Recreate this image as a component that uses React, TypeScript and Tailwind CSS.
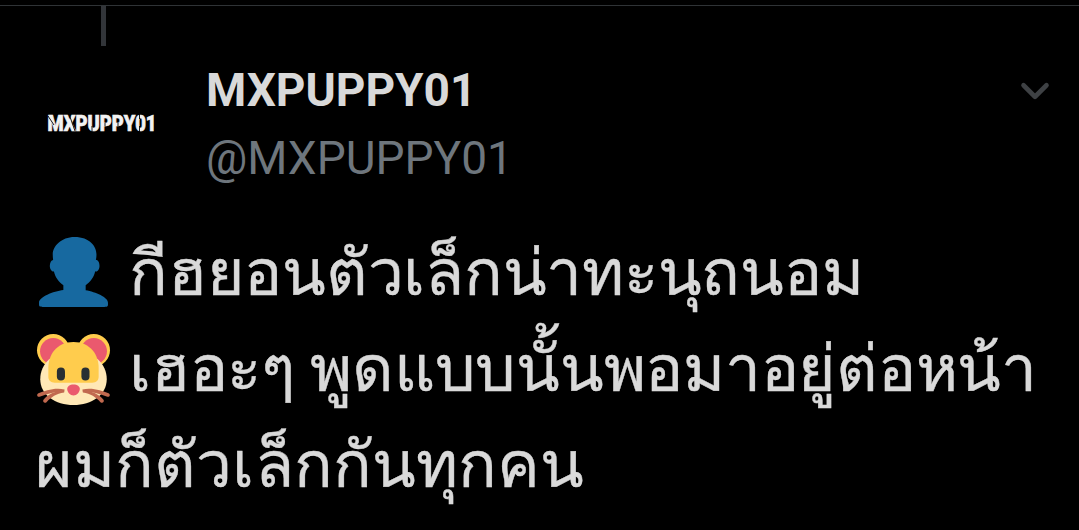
import type { ReactNode } from "react";
import { ChevronDown } from "lucide-react";

function SilhouetteEmoji() {
  return (
    <svg viewBox="0 0 36 36" className="w-[73px] h-[73px] shrink-0">
      <path
        fill="#1769a0"
        d="M24 26.799v-2.566c2-1.348 4.08-3.779 4.703-6.896.186.103.206.17.413.17.991 0 1.709-1.287 1.709-2.873 0-1.562-.823-2.827-1.794-2.865.187-.674.293-1.577.293-2.735C29.324 5.168 26 .527 18.541.527c-6.629 0-10.777 4.641-10.777 8.507 0 1.123.069 2.043.188 2.755-.911.137-1.629 1.352-1.629 2.845 0 1.587.804 2.873 1.796 2.873.206 0 .025-.067.209-.17C8.952 20.453 11 22.885 13 24.232v2.414c-5 .645-12 3.437-12 6.23v1.061C1 35 2.076 35 3.137 35h29.725C33.924 35 35 35 35 33.938v-1.061c0-2.615-6-5.225-11-6.078z"
      />
    </svg>
  );
}

function HamsterEmoji() {
  return (
    <svg viewBox="0 -0.5 36 36" className="w-[73px] h-[73px] shrink-0 overflow-visible">
      {/* ears */}
      <circle cx="8" cy="8.5" r="8" fill="#ffcc4d" />
      <circle cx="28" cy="8.5" r="8" fill="#ffcc4d" />
      <circle cx="8" cy="9" r="6.5" fill="#ea596e" />
      <circle cx="28" cy="9" r="6.5" fill="#ea596e" />
      {/* head */}
      <path
        fill="#ffe8b6"
        d="M18 9C8 9 1.6 15 1.6 22.8 1.6 30.5 9 35.500 18 35.500s16.400-5 16.400-12.700C34.400 15 28 9 18 9z"
      />
      <path
        fill="#ffcc4d"
        d="M18 4.400C9.500 4.400 5.600 11 5.600 17v4.500c0 2 1.200 3 3.200 3h18.400c2 0 3.200-1 3.200-3V17C30.400 11 26.500 4.400 18 4.400z"
      />
      <rect x="9.8" y="17" width="4" height="6.4" rx="2" fill="#292f33" />
      <rect x="21.9" y="17" width="4" height="6.4" rx="2" fill="#292f33" />
      <path
        fill="#ea596e"
        d="M18 25.400c-1.900 0-3.100.9-3.100 2.200 0 1.500 1.500 3.200 3.100 3.200s3.100-1.700 3.100-3.200c0-1.300-1.200-2.200-3.100-2.200z"
      />
      {/* whiskers */}
      <g fill="#c1694f">
        <path d="M13.600 27.800C9 26.700 4 28.300.7 29.700c-1.100.6-.6 2 .6 1.700C5 30 9 29 13.400 29z" />
        <path d="M13.400 28.300C9 28.300 5 30.500 3.200 32.900c-.6 1 .5 1.900 1.500 1.200C7 31.500 9.500 29.900 13.400 29.300z" />
        <path d="M22.400 27.800c4.600-1.100 9.600.5 12.900 1.900 1.100.6.6 2-.6 1.700C31 30 27 29 22.600 29z" />
        <path d="M22.600 28.300c4.400 0 8.400 2.200 10.200 4.600.6 1-.5 1.900-1.500 1.200-2.300-2.600-4.800-4.200-8.700-4.800z" />
      </g>
    </svg>
  );
}

function Avatar() {
  return (
    <div className="w-[130px] h-[130px] rounded-full bg-black flex items-center justify-center">
      <svg viewBox="0 0 120 40" className="w-[120px] h-[40px] overflow-visible">
        <text
          x="6.5"
          y="27.5"
          textLength="109"
          lengthAdjust="spacingAndGlyphs"
          fill="#f2f2f2"
          stroke="#f2f2f2"
          strokeWidth="0.7"
          className="font-['Roboto'] font-black text-[22px]"
        >
          MXPUPPY01
        </text>
        {/* stencil cuts */}
        <path
          d="M7 13l6 9M28 11l6 17M51 23v6M64 20v3M77 20v3M98.500 10v6M98.500 23v6"
          stroke="#000"
          strokeWidth="0.9"
        />
      </svg>
    </div>
  );
}

type LineProps = {
  icon?: ReactNode;
  text: string;
};
function Line({ icon, text }: LineProps) {
  return (
    <div className="h-[96px] flex items-center whitespace-nowrap">
      {icon && <span className="mr-[19px]">{icon}</span>}
      <span
        className={
          icon
            ? "pt-[4px] tracking-[-0.25px]"
            : "pt-[4px] -ml-[2px] tracking-[0.1px]"
        }
      >
        {text}
      </span>
    </div>
  );
}

function App() {
  return (
    <div className="w-full h-[530px] bg-black overflow-hidden pt-[5px]">
      <div className="border-t border-[#2f3336]">
        <div className="ml-[101px] w-[5px] h-[40px] bg-[#323539]" />
      </div>
      <div className="flex items-start h-[178px] pl-[36px] pr-[29px]">
        <div className="pt-[12px]">
          <Avatar />
        </div>
        <div className="ml-[40px] pt-[10px] font-['Roboto'] text-[46px] leading-[68px]">
          <div className="font-bold text-[#d9d9d9]">MXPUPPY01</div>
          <div className="text-[#6e767d]">@MXPUPPY01</div>
        </div>
        <ChevronDown
          className="ml-auto mt-[22px] w-[46px] h-[46px] -mr-[8px] text-[#3e4144]"
          strokeWidth={2.4}
        />
      </div>
      <div className="pl-[37px] font-['Roboto'] text-[64px] leading-[92px] text-[#d9d9d9] [-webkit-text-stroke:0.4px_#d9d9d9]">
        <Line icon={<SilhouetteEmoji />} text="กีฮยอนตัวเล็กน่าทะนุถนอม" />
        <Line icon={<HamsterEmoji />} text="เฮอะๆ พูดแบบนั้นพอมาอยู่ต่อหน้า" />
        <Line text="ผมก็ตัวเล็กกันทุกคน" />
      </div>
    </div>
  );
}
export default App;
